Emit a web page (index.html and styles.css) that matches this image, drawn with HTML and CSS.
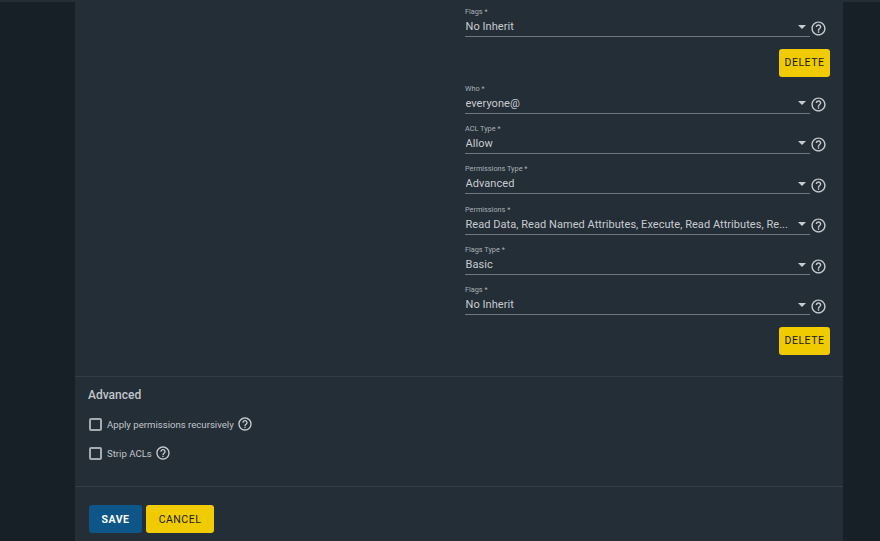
FILE: index.html
```html
<!DOCTYPE html>
<html lang="en">
<head>
<meta charset="utf-8">
<title>Edit ACL</title>
<link rel="stylesheet" href="styles.css">
</head>
<body>
<svg class="defs" width="0" height="0" aria-hidden="true">
  <symbol id="help" viewBox="0 0 24 24">
    <path fill="currentColor" d="M11 18h2v-2h-2v2zm1-16C6.48 2 2 6.48 2 12s4.48 10 10 10 10-4.48 10-10S17.52 2 12 2zm0 18c-4.41 0-8-3.59-8-8s3.59-8 8-8 8 3.59 8 8-3.59 8-8 8zm0-14c-2.21 0-4 1.79-4 4h2c0-1.1.9-2 2-2s2 .9 2 2c0 2-3 1.75-3 5h2c0-2.25 3-2.5 3-5 0-2.21-1.79-4-4-4z"/>
  </symbol>
</svg>
<div class="topbar"></div>
<main class="card">
  <section class="acl">
    <div class="field"><div class="control"><label class="label">Flags *</label><div class="select"><span class="value">No Inherit</span><i class="arrow"></i></div></div><svg class="help"><use href="#help"/></svg></div>
    <div class="actions"><button class="btn btn-yellow btn-delete">DELETE</button></div>
    <div class="field"><div class="control"><label class="label">Who *</label><div class="select"><span class="value">everyone@</span><i class="arrow"></i></div></div><svg class="help"><use href="#help"/></svg></div>
    <div class="field"><div class="control"><label class="label">ACL Type *</label><div class="select"><span class="value">Allow</span><i class="arrow"></i></div></div><svg class="help"><use href="#help"/></svg></div>
    <div class="field"><div class="control"><label class="label">Permissions Type *</label><div class="select"><span class="value">Advanced</span><i class="arrow"></i></div></div><svg class="help"><use href="#help"/></svg></div>
    <div class="field"><div class="control"><label class="label">Permissions *</label><div class="select"><span class="value">Read Data, Read Named Attributes, Execute, Read Attributes, Re...</span><i class="arrow"></i></div></div><svg class="help"><use href="#help"/></svg></div>
    <div class="field"><div class="control"><label class="label">Flags Type *</label><div class="select"><span class="value">Basic</span><i class="arrow"></i></div></div><svg class="help"><use href="#help"/></svg></div>
    <div class="field"><div class="control"><label class="label">Flags *</label><div class="select"><span class="value">No Inherit</span><i class="arrow"></i></div></div><svg class="help"><use href="#help"/></svg></div>
    <div class="actions"><button class="btn btn-yellow btn-delete">DELETE</button></div>
  </section>
  <section class="advanced">
    <h3 class="heading">Advanced</h3>
    <div class="check"><span class="box"></span><span class="check-label">Apply permissions recursively</span><svg class="help"><use href="#help"/></svg></div>
    <div class="check"><span class="box"></span><span class="check-label">Strip ACLs</span><svg class="help"><use href="#help"/></svg></div>
  </section>
  <footer class="footer">
    <button class="btn btn-blue">SAVE</button>
    <button class="btn btn-yellow btn-cancel">CANCEL</button>
  </footer>
</main>
</body>
</html>
```
FILE: styles.css
```css
* { box-sizing: border-box; }
html, body { height: 541px; overflow: hidden; }
body {
  margin: 0;
  background: #171f27;
  color: #c9cccf;
  font-family: Roboto, "Liberation Sans", sans-serif;
}
.defs { display: block; height: 0; }
.topbar { height: 2px; background: #232e37; }
.card {
  width: 768px;
  height: 539px;
  margin-left: 75px;
  background: #232e37;
  display: flex;
  flex-direction: column;
}
.acl {
  height: 374px;
  padding: 5px 13px 0 390px;
}
.field {
  display: flex;
  align-items: flex-end;
  height: 30px;
  width: 365px;
  margin-top: 10.4px;
}
.field:first-child { margin-top: 0; }
.actions + .field { margin-top: 7px; }
.control { width: 345px; }
.label {
  display: block;
  font-size: 7.3px;
  line-height: 9px;
  color: #aab0b5;
}
.select {
  display: flex;
  align-items: center;
  height: 21px;
  padding: 1px 0 0 0.5px;
  border-bottom: 1px solid #70767c;
}
.value {
  flex: 1;
  min-width: 0;
  font-size: 11px;
  letter-spacing: 0.05px;
  color: #c9cccf;
  white-space: nowrap;
  overflow: hidden;
}
.arrow {
  width: 0;
  height: 0;
  margin: 0 4px 0 7px;
  border-left: 4px solid transparent;
  border-right: 4px solid transparent;
  border-top: 4px solid #c9cccf;
}
.help {
  display: block;
  width: 17px;
  height: 17px;
  margin-bottom: 0.5px;
  color: #c9cccf;
  flex: none;
}
.actions {
  display: flex;
  justify-content: flex-end;
  margin-top: 11.5px;
}
.btn {
  display: block;
  height: 28px;
  border: 0;
  border-radius: 3px;
  padding: 0;
  font-family: Roboto, "Liberation Sans", sans-serif;
  font-size: 10.5px;
  letter-spacing: 0.5px;
}
.btn-yellow { background: #f0cb00; color: #1a1a1a; font-weight: 400; }
.btn-blue { background: #0d5687; color: #fff; font-weight: 700; width: 53px; }
.btn-delete { width: 51px; }
.btn-cancel { width: 68px; }
.advanced {
  height: 110px;
  border-top: 1px solid #333e47;
  padding: 11px 0 0 13px;
}
.heading {
  margin: 0 0 13px;
  font-size: 12px;
  line-height: 15px;
  font-weight: 500;
  color: #c2c5c8;
}
.check {
  display: flex;
  align-items: center;
  height: 16px;
  margin-bottom: 13px;
}
.box {
  width: 13px;
  height: 13px;
  margin-left: 1px;
  border: 2px solid #a6abaf;
  border-radius: 2px;
}
.check-label {
  margin-left: 5px;
  font-size: 9.6px;
  color: #c2c5c8;
}
.check .help { width: 16px; height: 16px; margin: 0 0 0 3px; }
.footer {
  flex: 1;
  display: flex;
  gap: 4px;
  border-top: 1px solid #333e47;
  padding: 18px 0 0 14px;
}
```
